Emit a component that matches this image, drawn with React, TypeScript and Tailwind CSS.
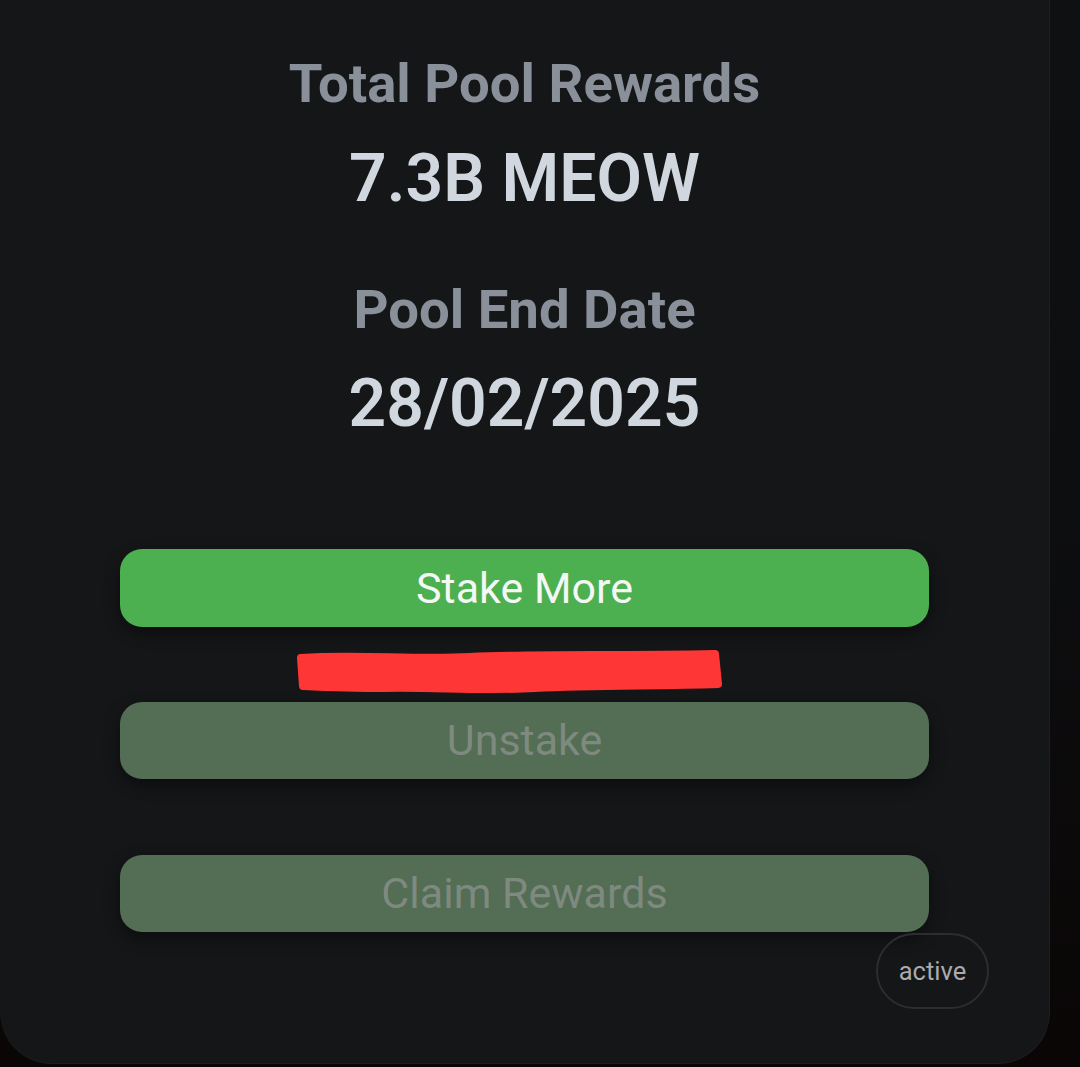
import React from "react";

const STATS = [
  { label: "Total Pool Rewards", value: "7.3B MEOW" },
  { label: "Pool End Date", value: "28/02/2025" },
];

function Scribble() {
  // red marker stroke drawn over the redacted line
  return (
    <svg width="430" height="46" viewBox="0 0 430 46" className="block">
      <path
        d="M6 10 C60 6 120 12 175 9 C240 6 320 8 420 6 L423 36 C360 38 300 37 240 40 C190 43 140 39 90 40 C60 40 30 39 8 38 Z"
        fill="#ff3636"
        stroke="#ff3636"
        strokeWidth="8"
        strokeLinejoin="round"
      />
    </svg>
  );
}

export default function App() {
  return (
    <div className="flex h-[1067px] w-[1080px] overflow-hidden bg-gradient-to-b from-[#0f1012] via-[#0d0e10] to-[#0a0606]" style={{ fontFamily: "Roboto, 'Noto Sans', sans-serif" }}>
      <div className="relative flex h-[1064px] w-[1050px] shrink-0 flex-col items-center rounded-b-[52px] border-r border-b border-[#1d1e21] bg-[#151618] px-[120px] pt-[56px]">

        {/* ── Stats ── */}
        {STATS.map(({ label, value }, i) => (
          <div key={label} className={`flex flex-col items-center ${i > 0 ? "mt-[70px]" : ""}`}>
            <div className="text-[54.5px] font-bold leading-none text-[#8a909a]">{label}</div>
            <div className="mt-[35px] text-[66px] font-semibold leading-none text-[#d0d7df]">{value}</div>
          </div>
        ))}

        {/* ── Actions ── */}
        <div className="mt-[112px] flex w-full flex-col items-center">
          <button className="h-[78px] w-full rounded-[22px] bg-[#4caf50] text-[43px] text-[#f4f8f4] shadow-[0_6px_16px_rgba(0,0,0,0.45)]">
            Stake More
          </button>
          <div className="mt-[21px] mb-[8px] -translate-x-[15px]">
            <Scribble />
          </div>
          <button disabled className="h-[77px] w-full rounded-[22px] bg-[#546d55] text-[43px] text-[#7e8a7f] shadow-[0_6px_16px_rgba(0,0,0,0.45)]">
            Unstake
          </button>
          <button disabled className="mt-[76px] h-[77px] w-full rounded-[22px] bg-[#546d55] text-[43px] text-[#7e8a7f] shadow-[0_6px_16px_rgba(0,0,0,0.45)]">
            Claim Rewards
          </button>
        </div>

        {/* ── Status badge ── */}
        <div className="absolute top-[933px] left-[876px] flex h-[76px] w-[113px] items-center justify-center rounded-full border-2 border-[#2c2d30] text-[25.5px] text-[#a9abae]">
          active
        </div>
      </div>
    </div>
  );
}
